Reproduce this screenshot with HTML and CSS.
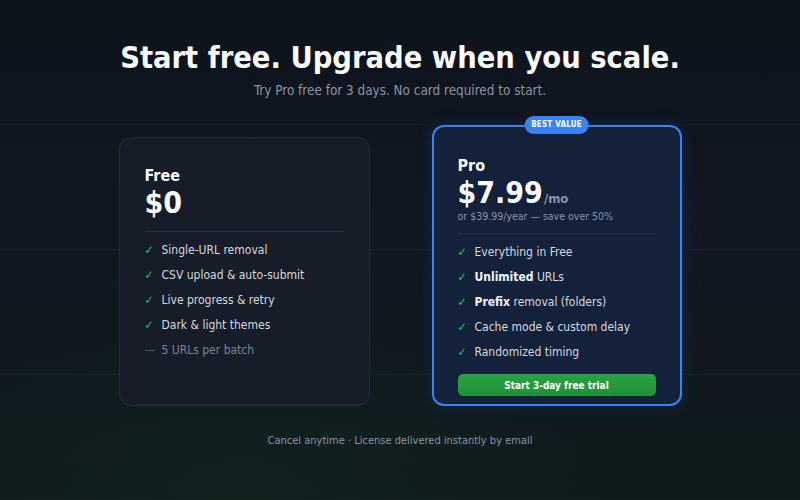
FILE: index.html
```html
<!DOCTYPE html>
<html lang="en">
<head>
<meta charset="utf-8">
<title>Pricing</title>
<link rel="stylesheet" href="styles.css">
</head>
<body>
<main class="page">
  <header class="hero">
    <h1 class="title">Start free. Upgrade when you scale.</h1>
    <p class="subtitle">Try Pro free for 3 days. No card required to start.</p>
  </header>

  <section class="cards">
    <article class="card card-free">
      <h2 class="plan">Free</h2>
      <div class="price">$0</div>
      <hr class="divider">
      <ul class="features">
        <li><span class="mark">✓</span>Single-URL removal</li>
        <li><span class="mark">✓</span>CSV upload &amp; auto-submit</li>
        <li><span class="mark">✓</span>Live progress &amp; retry</li>
        <li><span class="mark">✓</span>Dark &amp; light themes</li>
        <li class="limit"><span class="mark dash">—</span>5 URLs per batch</li>
      </ul>
    </article>

    <article class="card card-pro">
      <span class="badge">BEST VALUE</span>
      <h2 class="plan">Pro</h2>
      <div class="price">$7.99<span class="per">/mo</span></div>
      <div class="yearly">or $39.99/year — save over 50%</div>
      <hr class="divider">
      <ul class="features">
        <li><span class="mark">✓</span>Everything in Free</li>
        <li><span class="mark">✓</span><b>Unlimited</b>&nbsp;URLs</li>
        <li><span class="mark">✓</span><b>Prefix</b>&nbsp;removal (folders)</li>
        <li><span class="mark">✓</span>Cache mode &amp; custom delay</li>
        <li><span class="mark">✓</span>Randomized timing</li>
      </ul>
      <button class="cta" type="button">Start 3-day free trial</button>
    </article>
  </section>

  <p class="footnote">Cancel anytime · License delivered instantly by email</p>
</main>
</body>
</html>
```

FILE: styles.css
```css
* { box-sizing: border-box; }

html, body {
  margin: 0;
  height: 100%;
}

body {
  font-family: "DejaVu Sans", sans-serif;
  font-stretch: condensed;
  color: #d5d9df;
  background-color: #0f161f;
  background-image:
    linear-gradient(rgba(255,255,255,0.02) 1px, transparent 1px),
    radial-gradient(ellipse 70% 50% at 30% 100%, rgba(20, 60, 40, 0.25), transparent 70%),
    linear-gradient(180deg, #0d131b 0%, #111823 45%, #0e1a1b 100%);
  background-size: 100% 125px, 100% 100%, 100% 100%;
  background-position: 0 -1px, 0 0, 0 0;
  overflow: hidden;
}

.page {
  display: flex;
  flex-direction: column;
  align-items: center;
  padding-top: 41px;
}

.hero {
  text-align: center;
}

.title {
  margin: 0;
  font-size: 30.5px;
  line-height: 34px;
  font-weight: 700;
  color: #f8fafc;
}

.subtitle {
  margin: 7px 0 0;
  font-size: 13.4px;
  line-height: 18px;
  color: #8b94a2;
}

.cards {
  margin-top: 25px;
  display: grid;
  grid-template-columns: 251px 250px;
  column-gap: 62px;
  align-items: end;
}

.card {
  position: relative;
  border-radius: 12px;
  display: flex;
  flex-direction: column;
}

.card-free {
  height: 269px;
  padding: 28px 25px 0;
  background: #161c28;
  border: 1px solid #232b37;
}

.card-pro {
  height: 281px;
  padding: 29px 24px 0;
  background: #14213a;
  border: 2px solid #3b82f6;
  box-shadow: 0 0 18px rgba(59,130,246,0.12);
}

.badge {
  position: absolute;
  top: -11px;
  left: 50%;
  transform: translateX(-50%);
  background: #3b82f6;
  color: #fff;
  font-size: 8px;
  font-weight: 700;
  line-height: 18px;
  padding: 0 7px;
  border-radius: 9px;
  white-space: nowrap;
  letter-spacing: 0.2px;
}

.plan {
  margin: 0;
  font-size: 16px;
  line-height: 20px;
  font-weight: 700;
  color: #f8fafc;
}

.price {
  font-size: 30px;
  line-height: 33px;
  font-weight: 700;
  color: #f8fafc;
}

.per {
  font-size: 13px;
  line-height: 1;
  color: #8b94a2;
  margin-left: 1px;
}

.yearly {
  font-size: 10.5px;
  line-height: 14px;
  color: #8b94a2;
}

.divider {
  margin: 12px 0 0;
  border: 0;
  height: 1px;
  background: #242c39;
}

.card-pro .divider {
  margin-top: 10px;
  background: #22304a;
}

.features {
  list-style: none;
  margin: 5px 0 0;
  padding: 0;
}

.features li {
  display: flex;
  align-items: center;
  height: 25px;
  font-size: 12px;
  color: #d5d9df;
}

.features b {
  font-weight: 700;
  color: #f1f5f9;
}

.mark {
  width: 17px;
  flex: none;
  color: #22c55e;
  font-size: 12px;
}

.dash {
  color: #4b5563;
}

.limit {
  color: #7c8594 !important;
}

.cta {
  margin-top: 10px;
  height: 22px;
  border: 0;
  border-radius: 5px;
  background: linear-gradient(180deg, #2aa244 0%, #23903a 100%);
  color: #fff;
  font-family: inherit;
  font-stretch: condensed;
  font-size: 10px;
  font-weight: 700;
  padding: 0;
}

.footnote {
  margin: 27px 0 0;
  font-size: 11px;
  line-height: 16px;
  color: #8b94a2;
}
```
